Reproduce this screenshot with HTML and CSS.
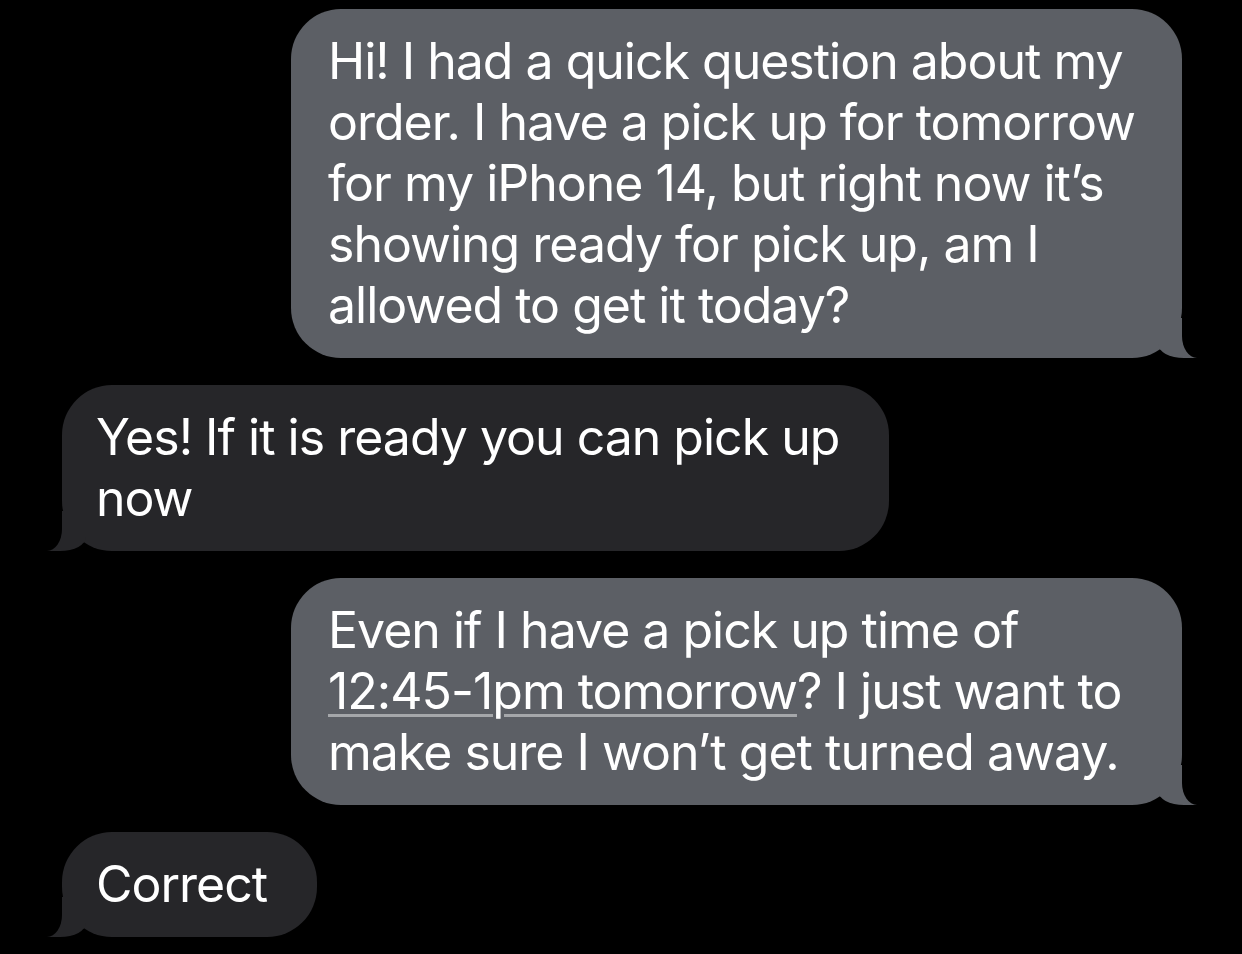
FILE: index.html
```html
<!DOCTYPE html>
<html lang="en">
<head>
    <meta charset="UTF-8">
    <meta name="viewport" content="width=device-width, initial-scale=1.0">
    <title>Messages</title>
    <link rel="stylesheet" href="styles.css">
</head>
<body>
    <div class="thread">
        <div class="bubble sent">
            Hi! I had a quick question about my<br>
            order. I have a pick up for tomorrow<br>
            for my iPhone 14, but right now it’s<br>
            showing ready for pick up, am I<br>
            allowed to get it today?
        </div>

        <div class="bubble received">
            Yes! If it is ready you can pick up<br>
            now
        </div>

        <div class="bubble sent">
            Even if I have a pick up time of<br>
            <span class="link">12:45-1pm tomorrow</span>? I just want to<br>
            make sure I won’t get turned away.
        </div>

        <div class="bubble received">
            Correct
        </div>
    </div>
</body>
</html>
```

FILE: styles.css
```css
body {
    margin: 0;
    background: #000;
    font-family: Inter, "Noto Sans", sans-serif;
    color: #fff;
}

.thread {
    display: flex;
    flex-direction: column;
    gap: 27px;
    padding: 9px 60px 0 62px;
}

.bubble {
    position: relative;
    box-sizing: border-box;
    width: fit-content;
    white-space: nowrap;
    font-size: 50px;
    line-height: 61px;
    letter-spacing: -1px;
    padding: 22px 49px 22px 37px;
    border-radius: 50px;
}

.sent {
    align-self: flex-end;
    width: 891px;
    background: #5c5f65;
}

.received {
    align-self: flex-start;
    background: #262629;
    padding-left: 34px;
    padding-right: 50px;
}

/* tails */
.bubble::before,
.bubble::after {
    content: "";
    position: absolute;
    bottom: 0;
    height: 40px;
}

.sent::before {
    right: -16px;
    width: 40px;
    background: #5c5f65;
    border-bottom-left-radius: 26px 14px;
}

.sent::after {
    right: -30px;
    width: 30px;
    background: #000;
    border-bottom-left-radius: 15px 22px;
}

.received::before {
    left: -16px;
    width: 40px;
    background: #262629;
    border-bottom-right-radius: 26px 14px;
}

.received::after {
    left: -30px;
    width: 30px;
    background: #000;
    border-bottom-right-radius: 15px 22px;
}

.link {
    text-decoration: underline;
    text-decoration-color: rgba(255, 255, 255, 0.45);
    text-decoration-thickness: 3px;
    text-underline-offset: 5px;
}
```
